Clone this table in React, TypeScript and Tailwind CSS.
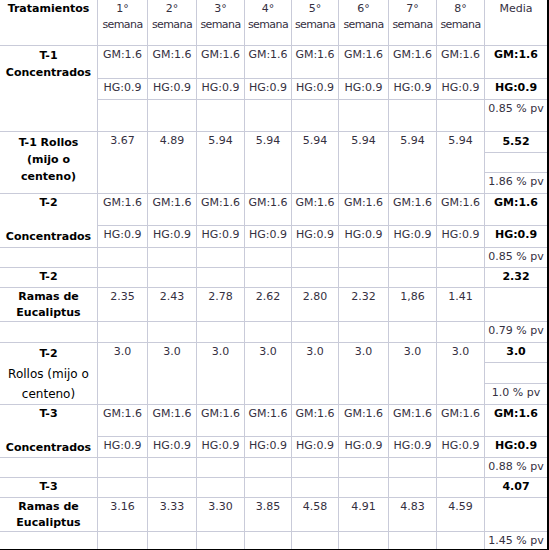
import React from "react";

const GRID = "border-[#c9cbd9]";
const cell = `border-r border-b ${GRID} p-0 pt-[1px] align-top text-center`;
const media = `border-b ${GRID} p-0 pt-[1px] align-top text-center`;
const bold = "font-bold text-black";

const weeks = ["1°", "2°", "3°", "4°", "5°", "6°", "7°", "8°"];
const widths = ["w-[50px]", "w-[49px]", "w-[48px]", "w-[47px]", "w-[47px]", "w-[50px]", "w-[48px]", "w-[48px]"];

function Weeks({ text, rowSpan }: { text: string[]; rowSpan?: number }) {
  return (
    <>
      {text.map((t, i) => (
        <td key={i} rowSpan={rowSpan} className={cell}>
          {t}
        </td>
      ))}
    </>
  );
}

const gm = Array(8).fill("GM:1.6");
const hg = Array(8).fill("HG:0.9");
const blank = Array(8).fill("");

// T-2 / T-3 concentrados: label split over GM and HG rows
function Concentrados({ label, pct, hs }: { label: string; pct: string; hs: string[] }) {
  return (
    <>
      <tr className={hs[0]}>
        <td rowSpan={2} className={`${cell} pt-0 leading-[16px] ${bold}`}>
          <div>{label}</div>
          <div className="mt-[18px]">Concentrados</div>
        </td>
        <Weeks text={gm} />
        <td className={`${media} ${bold}`}>GM:1.6</td>
      </tr>
      <tr className={hs[1]}>
        <Weeks text={hg} />
        <td className={`${media} ${bold}`}>HG:0.9</td>
      </tr>
      <tr className={hs[2]}>
        <td className={cell}></td>
        <Weeks text={blank} />
        <td className={media}>{pct}</td>
      </tr>
    </>
  );
}

function Ramas({ label, mean, values, pct, hs, last }: { label: string; mean: string; values: string[]; pct: string; hs: string[]; last?: boolean }) {
  const c = last ? cell.replace("border-b ", "") : cell;
  const m = last ? media.replace("border-b ", "") : media;
  return (
    <>
      <tr className={hs[0]}>
        <td className={`${cell} ${bold}`}>{label}</td>
        <Weeks text={blank} />
        <td className={`${media} ${bold}`}>{mean}</td>
      </tr>
      <tr className={hs[1]}>
        <td className={`${cell} ${bold}`}>
          Ramas de
          <br />
          Eucaliptus
        </td>
        <Weeks text={values} />
        <td className={media}></td>
      </tr>
      <tr className={hs[2]}>
        <td className={c}></td>
        {blank.map((_, i) => (
          <td key={i} className={c}></td>
        ))}
        <td className={m}>{pct}</td>
      </tr>
    </>
  );
}

export default function App() {
  return (
    <div className="w-[549px] h-[550px] bg-white">
      <div className="w-[549px] border-r-2 border-b-2 border-black font-['DejaVu_Sans','Verdana',sans-serif] text-[11px] leading-[16px] text-[#35303f]">
        <table className="w-[547px] table-fixed border-separate border-spacing-0">
          <colgroup>
            <col className="w-[98px]" />
            {widths.map((w, i) => (
              <col key={i} className={w} />
            ))}
            <col className="w-[62px]" />
          </colgroup>
          <tbody>
            <tr className="h-[46px]">
              <td className={`${cell} pt-0 ${bold}`}>Tratamientos</td>
              {weeks.map((w) => (
                <td key={w} className={`${cell} pt-0`}>
                  <div>{w}</div>
                  <div className="tracking-[-0.6px]">semana</div>
                </td>
              ))}
              <td className={`${media} pt-0`}>Media</td>
            </tr>

            {/* T-1 concentrados */}
            <tr className="h-[33px]">
              <td rowSpan={3} className={`${cell} pt-0 leading-[17px] ${bold}`}>
                T-1
                <br />
                Concentrados
              </td>
              <Weeks text={gm} />
              <td className={`${media} ${bold}`}>GM:1.6</td>
            </tr>
            <tr className="h-[21px]">
              <Weeks text={hg} />
              <td className={`${media} ${bold}`}>HG:0.9</td>
            </tr>
            <tr className="h-[32px]">
              <Weeks text={blank} />
              <td className={`${media} pt-0`}>0.85 % pv</td>
            </tr>

            {/* T-1 rollos */}
            <tr className="h-[21px]">
              <td rowSpan={3} className={`${cell} pt-[2px] leading-[17px] ${bold}`}>
                T-1 Rollos
                <br />
                (mijo o
                <br />
                centeno)
              </td>
              <Weeks rowSpan={3} text={["3.67", "4.89", "5.94", "5.94", "5.94", "5.94", "5.94", "5.94"]} />
              <td className={`${media} pt-[2px] ${bold}`}>5.52</td>
            </tr>
            <tr className="h-[20px]">
              <td className={media}></td>
            </tr>
            <tr className="h-[21px]">
              <td className={media}>1.86 % pv</td>
            </tr>

            <Concentrados label="T-2" pct="0.85 % pv" hs={["h-[32px]", "h-[22px]", "h-[20px]"]} />

            <Ramas
              label="T-2"
              mean="2.32"
              values={["2.35", "2.43", "2.78", "2.62", "2.80", "2.32", "1,86", "1.41"]}
              pct="0.79 % pv"
              hs={["h-[20px]", "h-[33px]", "h-[21px]"]}
            />

            {/* T-2 rollos */}
            <tr className="h-[20px]">
              <td rowSpan={3} className={`${cell} pt-0`}>
                <div className={`${bold} leading-[20px]`}>T-2</div>
                <div className="text-[12px] leading-[20px] text-black">
                  Rollos (mijo o
                  <br />
                  centeno)
                </div>
              </td>
              <Weeks rowSpan={3} text={Array(8).fill("3.0")} />
              <td className={`${media} ${bold}`}>3.0</td>
            </tr>
            <tr className="h-[20px]">
              <td className={media}></td>
            </tr>
            <tr className="h-[21px]">
              <td className={media}>1.0 % pv</td>
            </tr>

            <Concentrados label="T-3" pct="0.88 % pv" hs={["h-[32px]", "h-[21px]", "h-[20px]"]} />

            <Ramas
              label="T-3"
              mean="4.07"
              values={["3.16", "3.33", "3.30", "3.85", "4.58", "4.91", "4.83", "4.59"]}
              pct="1.45 % pv"
              hs={["h-[20px]", "h-[34px]", "h-[17px]"]}
              last
            />
          </tbody>
        </table>
      </div>
    </div>
  );
}
